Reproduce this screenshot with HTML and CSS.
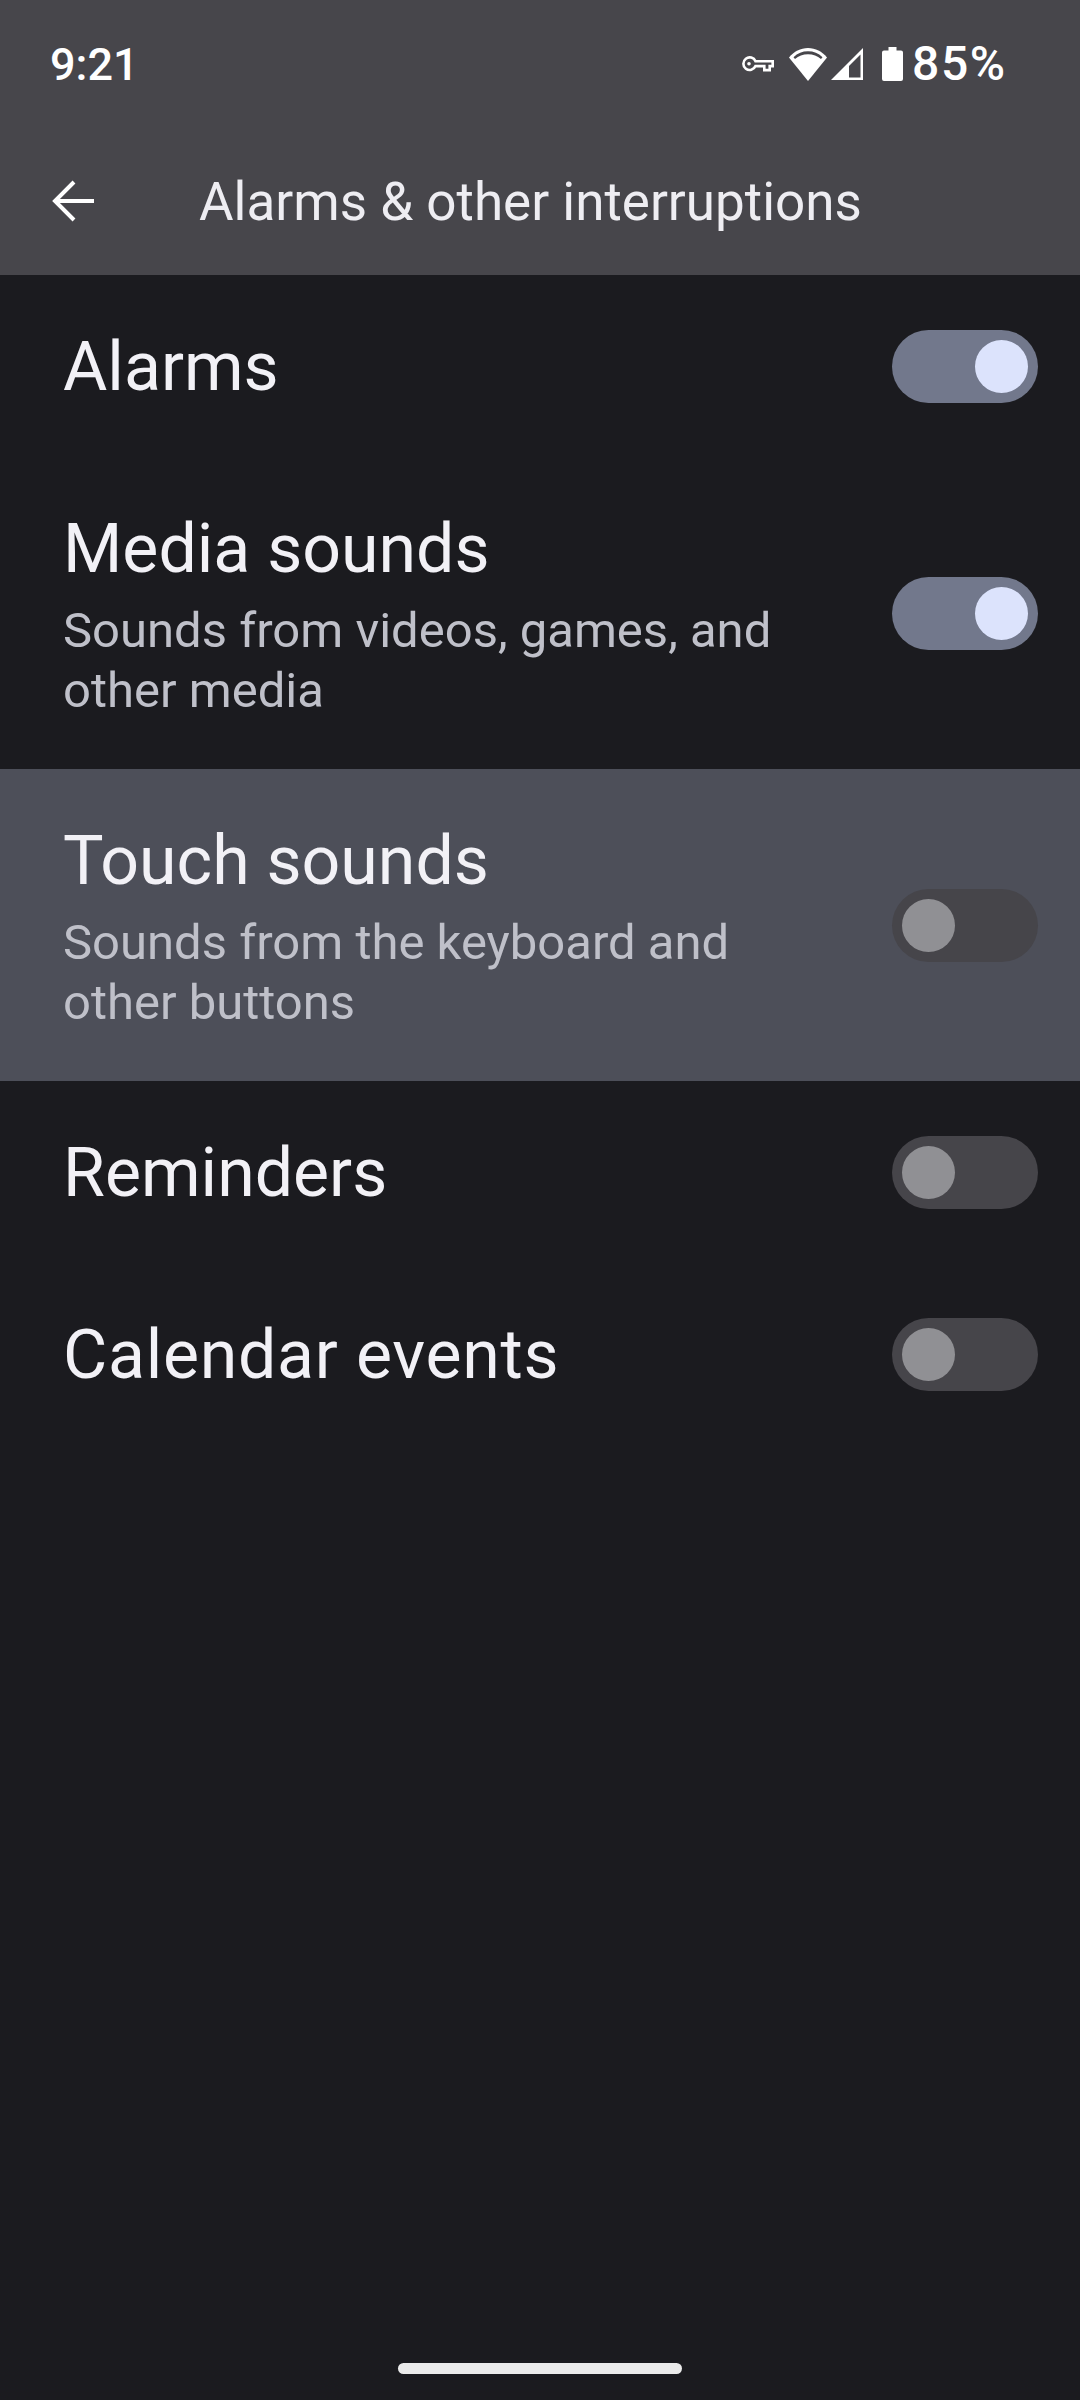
FILE: index.html
```html
<!DOCTYPE html>
<html lang="en">
<head>
<meta charset="utf-8">
<title>Alarms &amp; other interruptions</title>
<link rel="stylesheet" href="styles.css">
</head>
<body>
<div class="screen">
  <header class="top">
    <div class="status">
      <span class="clock">9:21</span>
      <div class="status-right">
        <svg class="ic-key" viewBox="0 0 33 17" width="33" height="17"><path fill="none" stroke="#fff" stroke-width="2.600" d="M14.500 5.300h17.200v4.800h-3v4h-5.400v-4h-8.800a6.300 6.300 0 1 1 0-4.800z"/><circle cx="8" cy="7.700" r="1.800" fill="#fff"/></svg>
        <svg class="ic-wifi" viewBox="0 0 38 33" width="38" height="33"><path fill="#fff" d="M19 33 0 9.500C5 3.500 11.500 0 19 0s14 3.500 19 9.500z"/><path fill="#47464b" d="M4.500 9.200C8.500 5.300 13.500 3.300 19 3.300s10.500 2 14.500 5.900l-1.500 1.800C28.500 7.900 24 6.300 19 6.300S9.500 7.900 6 11z"/></svg>
        <svg class="ic-signal" viewBox="0 0 32 32" width="32" height="32"><path fill="#fff" d="M32 0v32H0z"/><path fill="#47464b" d="M29.500 6.500V29.500H18V18z"/></svg>
        <svg class="ic-batt" viewBox="0 0 21 34" width="21" height="34"><path fill="#fff" d="M6.500 0h8v3.500h4.500a2 2 0 0 1 2 2V32a2 2 0 0 1-2 2H2a2 2 0 0 1-2-2V5.500a2 2 0 0 1 2-2h4.500z"/></svg>
        <span class="pct">85%</span>
      </div>
    </div>
    <div class="bar">
      <svg class="ic-back" viewBox="0 0 44 44" width="44" height="44"><path fill="none" stroke="#fff" stroke-width="4" d="M44 22H5M24 3 5 22l19 19"/></svg>
      <h1 class="title">Alarms &amp; other interruptions</h1>
    </div>
  </header>
  <main>
    <div class="row row-single">
      <div class="label"><div class="name">Alarms</div></div>
      <div class="sw on"><span class="thumb"></span></div>
    </div>
    <div class="row row-double">
      <div class="label"><div class="name">Media sounds</div><div class="sub">Sounds from videos, games, and<br>other media</div></div>
      <div class="sw on"><span class="thumb"></span></div>
    </div>
    <div class="row row-double hl">
      <div class="label"><div class="name">Touch sounds</div><div class="sub">Sounds from the keyboard and<br>other buttons</div></div>
      <div class="sw"><span class="thumb"></span></div>
    </div>
    <div class="row row-single">
      <div class="label"><div class="name">Reminders</div></div>
      <div class="sw"><span class="thumb"></span></div>
    </div>
    <div class="row row-single">
      <div class="label"><div class="name name-wide">Calendar events</div></div>
      <div class="sw"><span class="thumb"></span></div>
    </div>
  </main>
  <div class="home"></div>
</div>
</body>
</html>
```
FILE: styles.css
```css
* { box-sizing: border-box; }
html, body { margin: 0; padding: 0; }
body { background: #1b1b1f; font-family: Roboto, "Noto Sans", sans-serif; color: #f2f1f6; }
.screen { width: 1080px; height: 2400px; display: flex; flex-direction: column; overflow: hidden; }
.top { height: 275px; background: #47464b; flex: none; }
.status { height: 128px; padding: 0 75px 0 50px; display: flex; align-items: center; justify-content: space-between; color: #fff; }
.clock { font: 500 45px/1 Roboto, sans-serif; }
.status-right { display: flex; align-items: center; }
.ic-key { margin-right: 15px; }
.ic-wifi { margin-right: 4px; }
.ic-signal { margin-right: 19px; }
.ic-batt { margin-right: 9px; }
.pct { font: 500 48px/1 Roboto, sans-serif; letter-spacing: 1.500px; margin-right: -1.500px; }
.bar { height: 147px; display: flex; align-items: center; padding: 0 0 1px 50px; }
.ic-back { flex: none; margin-right: 105px; }
.title { margin: 0; padding-top: 3px; font: 400 53px/1 Roboto, sans-serif; color: #eeedf2; }
.row { display: flex; align-items: center; justify-content: space-between; padding: 0 42px 0 63px; }
.row-single { height: 182px; }
.row-double { height: 312px; }
.hl { background: #4d4f59; }
.name { font: 400 68px/84px Roboto, sans-serif; }
.name-wide { letter-spacing: .7px; }
.row-single .name { padding-top: 1px; }
.row-double .label { padding-top: 2px; }
.sub { font: 400 49px/60px Roboto, sans-serif; color: #bfc0c9; margin-top: 9px; padding-top: 1px; }
.sw { width: 146px; height: 73px; border-radius: 37px; background: #46454a; padding: 10px; display: flex; flex: none; }
.sw.on { background: #72788c; justify-content: flex-end; }
.thumb { width: 53px; height: 53px; border-radius: 50%; background: #909094; }
.on .thumb { background: #dce3fc; }
.home { margin: auto 0 26px 398px; width: 284px; height: 11px; border-radius: 6px; background: #ebebeb; }
```
